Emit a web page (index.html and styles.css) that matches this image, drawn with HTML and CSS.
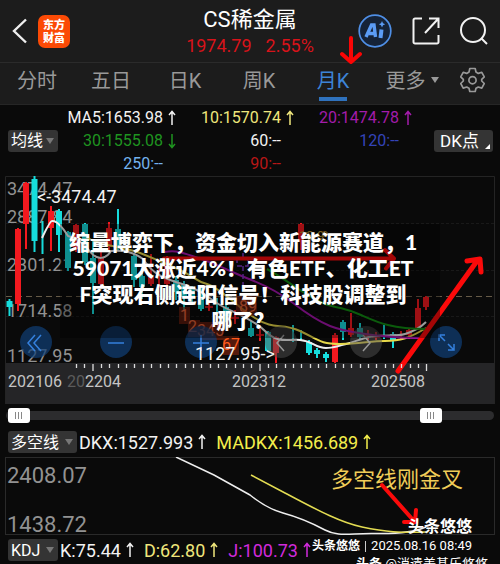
FILE: index.html
```
<!DOCTYPE html>
<html lang="zh-CN">
<head>
    <meta charset="UTF-8">
    <meta name="viewport" content="width=device-width, initial-scale=1.0">
    <title>CS稀金属</title>
    <link rel="stylesheet" href="styles.css">
</head>
<body>
    <svg class="defs" aria-hidden="true">
        <symbol id="up" viewBox="0 0 8 16"><path d="M4 15V2M1 5l3-3.500 3 3.500" fill="none" stroke="currentColor" stroke-width="1.500"/></symbol>
        <symbol id="down" viewBox="0 0 8 16"><path d="M4 1v13M1 11l3 3.500 3-3.500" fill="none" stroke="currentColor" stroke-width="1.500"/></symbol>
    </svg>
    <div class="app">
        <header class="top-bar">
            <div class="top-left">
                <button class="icon-btn" aria-label="返回">
                    <svg width="16" height="26" viewBox="0 0 16 26"><path d="M14 1.500L2 13l12 11.500" fill="none" stroke="#eee" stroke-width="2.400"/></svg>
                </button>
                <a class="brand" href="#"><span>东方</span><span>财富</span></a>
            </div>
            <div class="title">
                <h1>CS稀金属</h1>
                <p class="quote"><span>1974.79</span><span>2.55%</span></p>
            </div>
            <div class="top-right">
                <button class="icon-btn" aria-label="AI">
                    <svg width="34" height="36" viewBox="0 0 34 36">
                        <circle cx="17" cy="18" r="15.800" fill="#152338" stroke="#4f8fe6" stroke-width="1.700"/>
                        <path d="M8 24l5.500-12h2.500l1.500 12M11 20.500h6" fill="none" stroke="#5b9cf5" stroke-width="3.400"/>
                        <path d="M23.500 16.500l-1 8.500" stroke="#5b9cf5" stroke-width="4"/>
                        <path d="M24 8l1 2.200 2.200 1-2.200 1-1 2.200-1-2.200-2.200-1 2.200-1z" fill="#5b9cf5"/>
                    </svg>
                </button>
                <button class="icon-btn" aria-label="分享">
                    <svg width="28" height="28" viewBox="0 0 28 28"><path d="M10 1.500H3a1.500 1.500 0 0 0-1.500 1.500v22A1.500 1.500 0 0 0 3 26.500h22a1.500 1.500 0 0 0 1.500-1.500V18M17 1.500h9.500V11M26 2L13 16" fill="none" stroke="#f2f2f2" stroke-width="2"/></svg>
                </button>
                <button class="icon-btn" aria-label="搜索">
                    <svg width="28" height="28" viewBox="0 0 28 28"><circle cx="13" cy="13" r="12" fill="none" stroke="#f2f2f2" stroke-width="2"/><path d="M21.500 21.500L27 27" stroke="#f2f2f2" stroke-width="2"/></svg>
                </button>
            </div>
            <svg class="tip-arrow" width="22" height="30" viewBox="0 0 22 30"><path d="M11 2v24M2 18l9 8 9-8" fill="none" stroke="#fb0505" stroke-width="4" stroke-linecap="round" stroke-linejoin="round"/></svg>
        </header>

        <nav class="tabs">
            <button class="tab">分时</button>
            <button class="tab">五日</button>
            <button class="tab">日K</button>
            <button class="tab">周K</button>
            <button class="tab active">月K</button>
            <button class="tab more">更多</button>
            <button class="tab" aria-label="设置">
                <svg width="25" height="26" viewBox="0 0 25 26" fill="none" stroke="#999" stroke-width="1.700" stroke-linejoin="round">
                    <path d="M9.800 1.500h5.400l.8 3.600 2.300 1.300 3.500-1.100 2.500 4.600-2.600 2.500v1.600l2.600 2.500-2.500 4.600-3.500-1.100-2.300 1.300-.8 3.200H9.800L9 21.300 6.700 20l-3.500 1.100L.7 16.500 3.300 14v-1.600L.7 9.900l2.500-4.600 3.500 1.100L9 5.100z"/>
                    <circle cx="12.500" cy="13.200" r="3.600"/>
                </svg>
            </button>
        </nav>

        <section class="averages">
            <div class="select"><select aria-label="均线"><option>均线</option></select></div>
            <div class="ma-grid">
                <span class="ma white">MA5:1653.98<svg class="arrow"><use href="#up"/></svg></span>
                <span class="ma pale">10:1570.74<svg class="arrow"><use href="#up"/></svg></span>
                <span class="ma purple">20:1474.78<svg class="arrow"><use href="#up"/></svg></span>
                <span class="ma green">30:1555.08<svg class="arrow"><use href="#down"/></svg></span>
                <span class="ma white">60:--<i class="arrow"></i></span>
                <span class="ma blue">120:--<i class="arrow"></i></span>
                <span class="ma sky">250:--<i class="arrow"></i></span>
                <span class="ma red">90:--<i class="arrow"></i></span>
            </div>
            <button class="dk-btn">DK点</button>
        </section>

        <section class="k-chart">
            <svg class="plot" viewBox="0 176 500 228">
                <rect x="6" y="363" width="488" height="41" fill="#252527"/>
                <path d="M5.500 404V176.500H494.500V404" fill="none" stroke="#242424"/>
                <path d="M6 223.500H494M6 270.500H494M6 316.500H494" stroke="#191919" stroke-dasharray="3 2"/>
                <path d="M6 296.500H494" stroke="#665b48" stroke-dasharray="6 4"/>

                <g class="axis-text">
                    <text x="7" y="195">3474.47</text>
                    <text x="7" y="223">2887.84</text>
                    <text x="7" y="271">2301.21</text>
                    <text x="7" y="317">1714.58</text>
                    <text x="7" y="362">1127.95</text>
                </g>

                <!-- falling months -->
                <g stroke="#16dcdc">
                    <path stroke-width="2" d="M9.500 299V316M34.500 176V252M42.500 221V254M59 209V252M68 231V271M85 223V265M93 240V314M118 209V250M134 254V287M142 273V299M176 276V300M184 281V310M192 286V304M201 287V311M217 298V312M226 302V322M251 321V337M268 331V352M293 325V342M301 330V340M309 340V355M317 348V358M326 352V362M343 320V340M360 323V340M384 325V339M393 332V348"/>
                    <path stroke-width="6" d="M9.500 301V307M34.500 179V241M59 211V235M68 232V268M85 224V262M93 258V283M118 229V248M134 256V280M142 276V287M176 280V292M184 285V297M192 288V298M201 290V309M226 307V316M251 328V336M268 332V351M309 342V353M317 350V354M326 354V358M343 322V332M360 328V337M393 334V341"/>
                </g>
                <!-- rising months -->
                <g stroke="#f3191f">
                    <path stroke-width="2" d="M18 228V311M26 182V249M51 206V251M76 224V252M101 252V287M109 222V251M151 254V286M159 266V288M167 256V288M209 302V311M235 310V324M260 329V341M276 336V363M301 223V250M335 333V363M351 313V337M368 330V340M376 332V340M401 331V339M409 328V339M418 299V330M426 296V310"/>
                    <path stroke-width="6" d="M18 229V304M26 183V224M51 211V228M76 225V249M101 258V284M109 228V247M151 277V284M167 257V284M276 337V353M301 224V242M335 335V362M351 328V335M409 330V335M418 308V328M426 297V307"/>
                    <path stroke-width="1.500" d="M205 307h8M231 318h8M256 335h8M364 336h8M372 337h8"/>
                </g>

                <g fill="none" stroke-width="2">
                    <path stroke="#eee" d="M42 238Q50 221 52 221Q58 220 68 236C76 238 82 242 88 249C97 262 106 259 111 251C122 250 134 252 143 259C157 280 171 279 190 287S208 298 220 305S252 318 265 331S287 339 300 340S315 348 326 348S352 342 365 338S396 337 405 334Q418 330 426 322"/>
                    <path stroke="#e6d84a" d="M86 237C99 246 122 246 140 253S165 263 180 270S195 281 207 284S235 305 255 318S281 322 300 331S320 344 340 344S370 341 385 341S410 338 426 328"/>
                    <path stroke="#a516ad" d="M165 252C178 249 188 255 201 259S236 274 249 279S280 293 293 303S320 322 330 326S374 338 423 338"/>
                    <path stroke="#128c13" d="M267 269C288 280 310 300 328 305S345 308 361 315S391 329 426 329"/>
                    <path stroke="#7e39c8" stroke-width="1.500" d="M237 259h11v7h-11zM243 253v6M243 266v19" stroke-dasharray="5 3"/>
                </g>

                <g fill="#7e2410" fill-opacity=".65">
                    <path d="M179 307h11v17h-11zM188 320h12v17h-12zM200 322h23v18h-23zM236 296h21v20h-21zM223 336h16v19h-16z"/>
                </g>
                <g class="signal">
                    <text x="180" y="321">1</text>
                    <text x="188" y="332">2</text>
                    <text x="197" y="336">345</text>
                    <text x="239" y="312">89</text>
                    <text x="222" y="350" class="lit">67</text>
                    <text x="299" y="240" class="gold">13.9</text>
                </g>
                <circle cx="325" cy="234" r="2.500" fill="none" stroke="#b99431"/>

                <g fill="none" stroke="#fb0a0a" stroke-linecap="round" stroke-linejoin="round">
                    <path stroke-width="4" d="M164 258.500H393M385 250l9 8.500-8 10"/>
                    <path stroke-width="5" d="M398 371L477 261M467 261l13-2 1 13"/>
                </g>

                <path stroke="#ddd" stroke-width="1.300" d="M76.500 364v4M84.500 364v4M101.500 364v4M109.500 364v4M118.500 364v4M126.500 364v4M134.500 364v4M143.500 364v4M151.500 364v4M160.500 364v4M168.500 364v4M176.500 364v4M185.500 364v4M193.500 364v4M201.500 364v4M210.500 364v4M218.500 364v4M226.500 364v4M235.500 364v4M243.500 364v4M251.500 364v4M268.500 364v4M276.500 364v4M285.500 364v4M293.500 364v4M301.500 364v4M310.500 364v4M318.500 364v4M326.500 364v4M335.500 364v4M343.500 364v4M351.500 364v4M360.500 364v4M368.500 364v4M376.500 364v4M385.500 364v4M393.500 364v4M401.500 364v4M410.500 364v4M418.500 364v4M93 364v7M260 364v7M426.500 364v7"/>
                <g class="date-text">
                    <text x="8" y="387">202106</text>
                    <text x="67" y="387"><tspan class="faded">20</tspan>2204</text>
                    <text x="232" y="387">202312</text>
                    <text x="371" y="387">202508</text>
                </g>
            </svg>

            <div class="chart-tools">
                <button class="round first" aria-label="更早"><svg viewBox="0 0 32 32"><path d="M15 9l-7 8 7 8M21 9l-7 8 7 8"/></svg></button>
                <button class="round zoom-out" aria-label="缩小"><svg viewBox="0 0 32 32"><path d="M8 17h16"/></svg></button>
                <button class="round zoom-in" aria-label="放大"><svg viewBox="0 0 32 32"><path d="M8 17h16M16 9v16"/></svg></button>
                <button class="round grey prev" aria-label="左移"><svg viewBox="0 0 32 32"><path d="M19 9l-7 8 7 8"/></svg></button>
                <button class="round grey next" aria-label="右移"><svg viewBox="0 0 32 32"><path d="M13 9l7 8-7 8"/></svg></button>
                <button class="round full" aria-label="全屏"><svg viewBox="0 0 32 32"><path d="M9 15V9h6M9 9l6 6M24 18v6h-6M24 24l-6-6"/></svg></button>
            </div>

            <svg class="plot peaks" viewBox="0 176 500 228">
                <text x="37" y="203">&lt;-3474.47</text>
                <text x="195" y="360">1127.95-&gt;</text>
            </svg>

            <h2 class="headline">缩量博弈下，资金切入新能源赛道，1<br>59071大涨近4%！有色ETF、化工ET<br>F突现右侧连阳信号！科技股调整到<br>哪了？</h2>
        </section>

        <div class="range">
            <input type="range" min="0" max="1000" value="4" aria-label="开始时间">
            <input type="range" min="0" max="1000" value="888" aria-label="结束时间">
        </div>

        <div class="indicator">
            <div class="select wide"><select aria-label="多空线"><option>多空线</option></select></div>
            <span class="white">DKX:1527.993<svg class="arrow"><use href="#up"/></svg></span>
            <span class="yellow">MADKX:1456.689<svg class="arrow"><use href="#up"/></svg></span>
        </div>

        <section class="dkx-chart">
            <svg class="plot" viewBox="0 457 500 78">
                <rect x="5.500" y="457.500" width="489" height="77" fill="none" stroke="#2a2a2a"/>
                <g class="scale-text">
                    <text x="7" y="483">2408.07</text>
                    <text x="7" y="532">1438.72</text>
                </g>
                <path d="M176 457L214 475L250 495C260 503 272 510 283 513S312 523 325 530S350 533 375 533.500S415 532 426 527" fill="none" stroke="#eee" stroke-width="1.500"/>
                <path d="M251 475L285 493C310 506 338 522 362 527S400 533 426 532" fill="none" stroke="#e3dc52" stroke-width="1.500"/>
                <text x="331" y="487" class="cross-text">多空线刚金叉</text>
                <path d="M382 485L414 521M404 522h11l1-12" fill="none" stroke="#fb0a0a" stroke-width="4" stroke-linecap="round" stroke-linejoin="round"/>
            </svg>
            <span class="author">头条悠悠</span>
        </section>

        <div class="indicator">
            <div class="select"><select aria-label="KDJ"><option>KDJ</option></select></div>
            <span class="white">K:75.44<svg class="arrow"><use href="#up"/></svg></span>
            <span class="pale">D:62.80<svg class="arrow"><use href="#up"/></svg></span>
            <span class="magenta">J:100.73<svg class="arrow"><use href="#up"/></svg></span>
        </div>

        <p class="stamp"><b>头条悠悠</b><i></i><span>2025.08.16 08:49</span></p>
        <p class="credit"><b>头条</b> @消遣美基乐悠悠</p>
    </div>
</body>
</html>
```

FILE: styles.css
```
* {
    box-sizing: border-box;
}

body {
    margin: 0;
    background: #0a0a0a;
    color: #fff;
    font-family: Roboto, "Noto Sans CJK SC", sans-serif;
}

h1, h2, p {
    margin: 0;
    font-weight: 400;
}

button, select {
    margin: 0;
    padding: 0;
    border: 0;
    background: none;
    color: inherit;
    font-family: inherit;
    cursor: pointer;
}

.defs {
    position: absolute;
    width: 0;
    height: 0;
}

.app {
    position: relative;
    height: 100vh;
    overflow: hidden;
}

/* header */
.top-bar {
    position: relative;
    display: grid;
    grid-template-columns: 1fr auto 1fr;
    align-items: center;
    height: 63px;
    padding: 0 12px;
    background: #1c1c1c;
    border-bottom: 1px solid #2b2b2b;
}
.top-left, .top-right {
    display: flex;
    align-items: center;
}
.top-left {
    gap: 10px;
}
.top-right {
    justify-content: flex-end;
    gap: 20px;
}
.icon-btn {
    display: flex;
}
.brand {
    display: flex;
    flex-direction: column;
    align-items: center;
    justify-content: center;
    width: 32px;
    height: 33px;
    border-radius: 7px;
    background: #fb4a05;
    color: #fff;
    font: 900 11px/13px "Noto Sans CJK SC", sans-serif;
    text-decoration: none;
}
.title {
    padding-top: 2px;
    text-align: center;
}
.title h1 {
    font-size: 22px;
    line-height: 28px;
}
.quote {
    display: flex;
    gap: 14px;
    color: #d8131a;
    font-size: 18px;
    line-height: 24px;
}
.tip-arrow {
    position: absolute;
    top: 36px;
    left: 68%;
}

/* period tabs */
.tabs {
    display: grid;
    grid-template-columns: repeat(6, 1fr) 56px;
    height: 42px;
    background: #1c1c1c;
    border-bottom: 1px solid #262626;
}
.tab {
    position: relative;
    display: flex;
    align-items: center;
    justify-content: center;
    padding-bottom: 8px;
    color: #999;
    font-size: 20px;
}
.tab.active {
    color: #3d84d6;
}
.tab.active::after {
    content: "";
    position: absolute;
    bottom: 3px;
    width: 28px;
    height: 4px;
    background: #2f72bd;
}
.tab.more {
    gap: 5px;
    padding-left: 10px;
}
.tab.more::after {
    content: "";
    border: 4px solid transparent;
    border-top: 6px solid #999;
    border-bottom: 0;
}

/* moving averages */
.averages {
    display: flex;
    align-items: center;
    height: 71px;
    padding: 0 7px 0 8px;
}
.select {
    position: relative;
    width: 50px;
    height: 22px;
    border-radius: 3px;
    background: #343434;
}
.select.wide {
    width: 69px;
}
.select::after {
    content: "";
    position: absolute;
    top: 8px;
    right: 4px;
    border: 4px solid transparent;
    border-top: 6px solid #777;
    border-bottom: 0;
    pointer-events: none;
}
.select select {
    width: 100%;
    height: 100%;
    padding-left: 3px;
    appearance: none;
    font-size: 16px;
}
.ma-grid {
    flex: 1;
    display: grid;
    grid-template-columns: repeat(3, 1fr);
}
.ma {
    display: flex;
    align-items: center;
    justify-content: flex-end;
    font-size: 16px;
    line-height: 23px;
}
.arrow {
    width: 8px;
    height: 16px;
    margin-left: 5px;
}
.dk-btn {
    position: relative;
    width: 59px;
    height: 22px;
    margin-left: 22px;
    padding-right: 8px;
    border-radius: 3px;
    background: #343434;
    font-size: 17px;
    line-height: 22px;
}
.dk-btn::after {
    content: "";
    position: absolute;
    right: 3px;
    bottom: 3px;
    border-left: 5px solid transparent;
    border-bottom: 5px solid #fff;
}

.white { color: #f2f2f2; }
.pale { color: #efe67c; }
.yellow { color: #f3ee4c; }
.purple { color: #a31cab; }
.magenta { color: #d12bdc; }
.green { color: #1f9420; }
.blue { color: #3444b8; }
.sky { color: #74b2ee; }
.red { color: #b81717; }

/* candles */
.k-chart, .dkx-chart {
    position: relative;
}
.plot {
    display: block;
    width: 100%;
    height: auto;
}
.peaks {
    position: absolute;
    top: 0;
    left: 0;
    fill: #f2f2f2;
    font-size: 18px;
    pointer-events: none;
}
.axis-text {
    fill: #929292;
    font-size: 18px;
}
.date-text {
    fill: #c4c4c4;
    font-size: 16px;
}
.faded {
    fill: #5c5c5c;
}
.signal {
    fill: #e0603a;
    font-size: 16px;
}
.signal .lit {
    fill: #ff5a1c;
}
.signal .gold {
    fill: #b99431;
    font-size: 13px;
}
.round {
    position: absolute;
    top: 150px;
    width: 32px;
    height: 32px;
    border-radius: 50%;
    background: rgba(16, 62, 118, 0.7);
}
.round svg {
    display: block;
    fill: none;
    stroke: #3580dd;
    stroke-width: 1.5;
}
.round.grey {
    background: rgba(80, 80, 80, 0.5);
}
.round.grey svg {
    stroke: #999;
}
.first { left: 4%; }
.zoom-out { left: 20%; }
.zoom-in { left: 37%; }
.prev { left: 53%; }
.next { left: 70%; }
.full { left: 86%; }

.headline {
    position: absolute;
    top: 48px;
    left: 12%;
    right: 12%;
    padding: 5px 14px 5px 0;
    background: rgba(0, 0, 0, 0.35);
    font: 900 21px/26px Lato, "Noto Sans CJK SC", sans-serif;
    text-align: center;
    white-space: nowrap;
}

/* time range */
.range {
    position: relative;
    height: 23px;
    margin: 0 6px;
}
.range::before {
    content: "";
    position: absolute;
    top: 7px;
    left: 0;
    right: 0;
    height: 9px;
    border-radius: 5px;
    background: #2c2c2e;
}
.range input {
    position: absolute;
    top: 4px;
    left: 0;
    width: 100%;
    height: 15px;
    margin: 0;
    appearance: none;
    background: none;
    pointer-events: none;
}
.range input::-webkit-slider-thumb {
    appearance: none;
    width: 22px;
    height: 15px;
    border-radius: 3px;
    background:
        linear-gradient(#888, #888) 7px 4px / 1px 7px no-repeat,
        linear-gradient(#888, #888) 10px 4px / 1px 7px no-repeat,
        linear-gradient(#888, #888) 13px 4px / 1px 7px no-repeat,
        #fff;
    pointer-events: auto;
}

/* indicator rows */
.indicator {
    display: flex;
    align-items: center;
    height: 30px;
    padding: 0 8px;
    font-size: 18px;
}
.indicator > span {
    display: flex;
    align-items: center;
    margin-left: 2px;
}
.indicator > span + span {
    margin-left: 10px;
}
.scale-text {
    fill: #929292;
    font-size: 22px;
}
.cross-text {
    fill: #f0cd58;
    font-size: 22px;
}

/* watermarks */
.author {
    position: absolute;
    right: 28px;
    bottom: 0;
    font: 700 16px/20px "Noto Sans CJK SC", sans-serif;
}
.stamp {
    position: absolute;
    right: 28px;
    bottom: 9px;
    display: flex;
    align-items: center;
    gap: 5px;
    font-size: 13px;
    line-height: 18px;
}
.stamp b {
    font-size: 12px;
}
.stamp i {
    width: 1px;
    height: 11px;
    background: #ccc;
}
.credit {
    position: absolute;
    right: 12px;
    bottom: -10px;
    font-size: 13px;
    line-height: 20px;
}
```
